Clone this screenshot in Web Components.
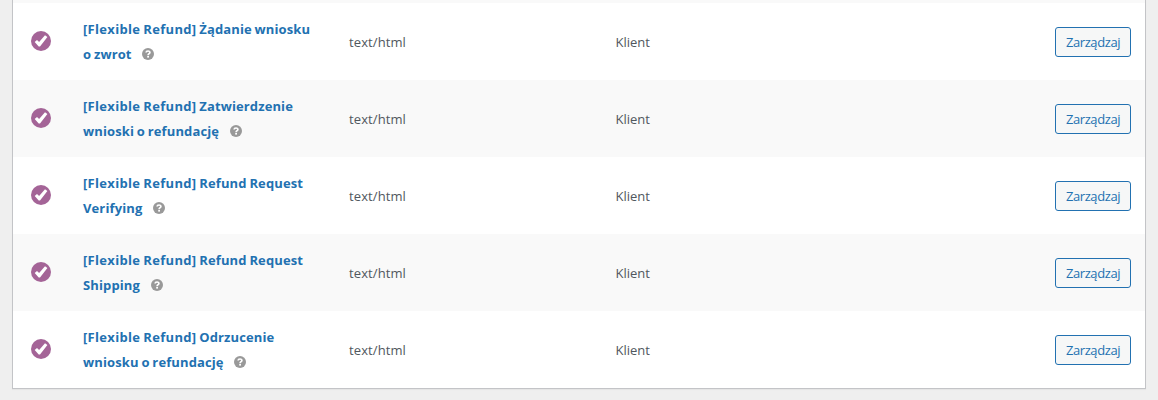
<!DOCTYPE html>
<html lang="pl">
<head>
<meta charset="utf-8">
<title>E-maile</title>
<style>
    body {
        margin: 0;
        height: 400px;
        overflow: hidden;
        background: #efefef;
        font-family: "Open Sans", "Noto Sans", sans-serif;
        font-size: 13px;
        color: #50575e;
    }
</style>
</head>
<body>
<lista-emaili></lista-emaili>

<script>
class IkonaStatus extends HTMLElement {
    connectedCallback() {
        this.attachShadow({ mode: 'open' });
        this.shadowRoot.innerHTML = `
            <style>
                :host { display: block; width: 20px; height: 20px; }
                svg { display: block; }
            </style>
            <svg width="20" height="20" viewBox="0 0 20 20">
                <circle cx="10" cy="10" r="10" fill="#a46497"/>
                <path d="M3.7 11 6 8.9 8.1 11 14 4.2 16.4 6 9 15.5 7.7 15.5Z" fill="#fff"/>
            </svg>
        `;
    }
}

class IkonaPomoc extends HTMLElement {
    connectedCallback() {
        this.attachShadow({ mode: 'open' });
        this.shadowRoot.innerHTML = `
            <style>
                :host { display: inline-block; width: 12px; height: 12px; margin-left: 10.8px; vertical-align: -1.5px; }
                svg { display: block; }
            </style>
            <svg width="12" height="12" viewBox="0 0 12 12">
                <circle cx="6" cy="6" r="6" fill="#999"/>
                <path d="M4.1 4.5C4.2 2.5 7.9 2.5 7.9 4.4 7.9 5.7 6.1 5.5 6.1 7.2" fill="none" stroke="#fff" stroke-width="1.7"/>
                <rect x="5.2" y="8" width="1.8" height="1.6" fill="#fff"/>
            </svg>
        `;
    }
}

class PrzyciskZarzadzaj extends HTMLElement {
    connectedCallback() {
        this.attachShadow({ mode: 'open' });
        this.shadowRoot.innerHTML = `
            <style>
                :host { display: block; }
                a {
                    display: flex;
                    align-items: center;
                    justify-content: center;
                    box-sizing: border-box;
                    width: 76px;
                    height: 30px;
                    border: 1px solid #2271b1;
                    border-radius: 3px;
                    background: #f6f7f7;
                    color: #2271b1;
                    white-space: nowrap;
                    letter-spacing: -.4px;
                }
            </style>
            <a><slot></slot></a>
        `;
    }
}

class WierszEmaila extends HTMLElement {
    connectedCallback() {
        this.attachShadow({ mode: 'open' });
        this.shadowRoot.innerHTML = `
            <style>
                :host {
                    display: grid;
                    grid-template-columns: 70px 266px 266.5px 1fr auto;
                    align-items: center;
                    height: 77px;
                    padding-right: 14px;
                    background: #fff;
                }
                :host(:nth-of-type(even)) { background: #f9f9f9; }
                ikona-status { margin: 0 0 2px 18px; }
                .nazwa {
                    color: #2271b1;
                    font-weight: 700;
                    line-height: 25px;
                    letter-spacing: .12px;
                    word-spacing: -.7px;
                    white-space: nowrap;
                }
                ::slotted(span) { letter-spacing: .32px; }
                .typ { letter-spacing: .1px; }
            </style>
            <ikona-status></ikona-status>
            <div class="nazwa"><slot></slot><ikona-pomoc></ikona-pomoc></div>
            <div class="typ">${this.getAttribute('typ')}</div>
            <div class="odbiorca">${this.getAttribute('odbiorca')}</div>
            <przycisk-zarzadzaj>Zarządzaj</przycisk-zarzadzaj>
        `;
    }
}

class ListaEmaili extends HTMLElement {
    connectedCallback() {
        const nazwy = [
            'Żądanie wniosku<br>o zwrot',
            'Zatwierdzenie<br>wnioski o refundację',
            'Refund Request<br>Verifying',
            'Refund Request<br>Shipping',
            'Odrzucenie<br>wniosku o refundację'
        ];
        this.attachShadow({ mode: 'open' });
        this.shadowRoot.innerHTML = `
            <style>
                :host {
                    display: block;
                    margin: 0 12px;
                    border: 1px solid #c3c4c7;
                    border-top: 0;
                    box-shadow: 0 1px 1px rgba(0, 0, 0, .04);
                }
                .poprzedni { height: 3px; background: #f9f9f9; }
            </style>
            <div class="poprzedni"></div>
            ${nazwy.map(nazwa => `
                <wiersz-emaila typ="text/html" odbiorca="Klient"><span>[Flexible Refund]</span> ${nazwa}</wiersz-emaila>
            `).join('')}
        `;
    }
}

customElements.define('ikona-status', IkonaStatus);
customElements.define('ikona-pomoc', IkonaPomoc);
customElements.define('przycisk-zarzadzaj', PrzyciskZarzadzaj);
customElements.define('wiersz-emaila', WierszEmaila);
customElements.define('lista-emaili', ListaEmaili);
</script>
</body>
</html>
